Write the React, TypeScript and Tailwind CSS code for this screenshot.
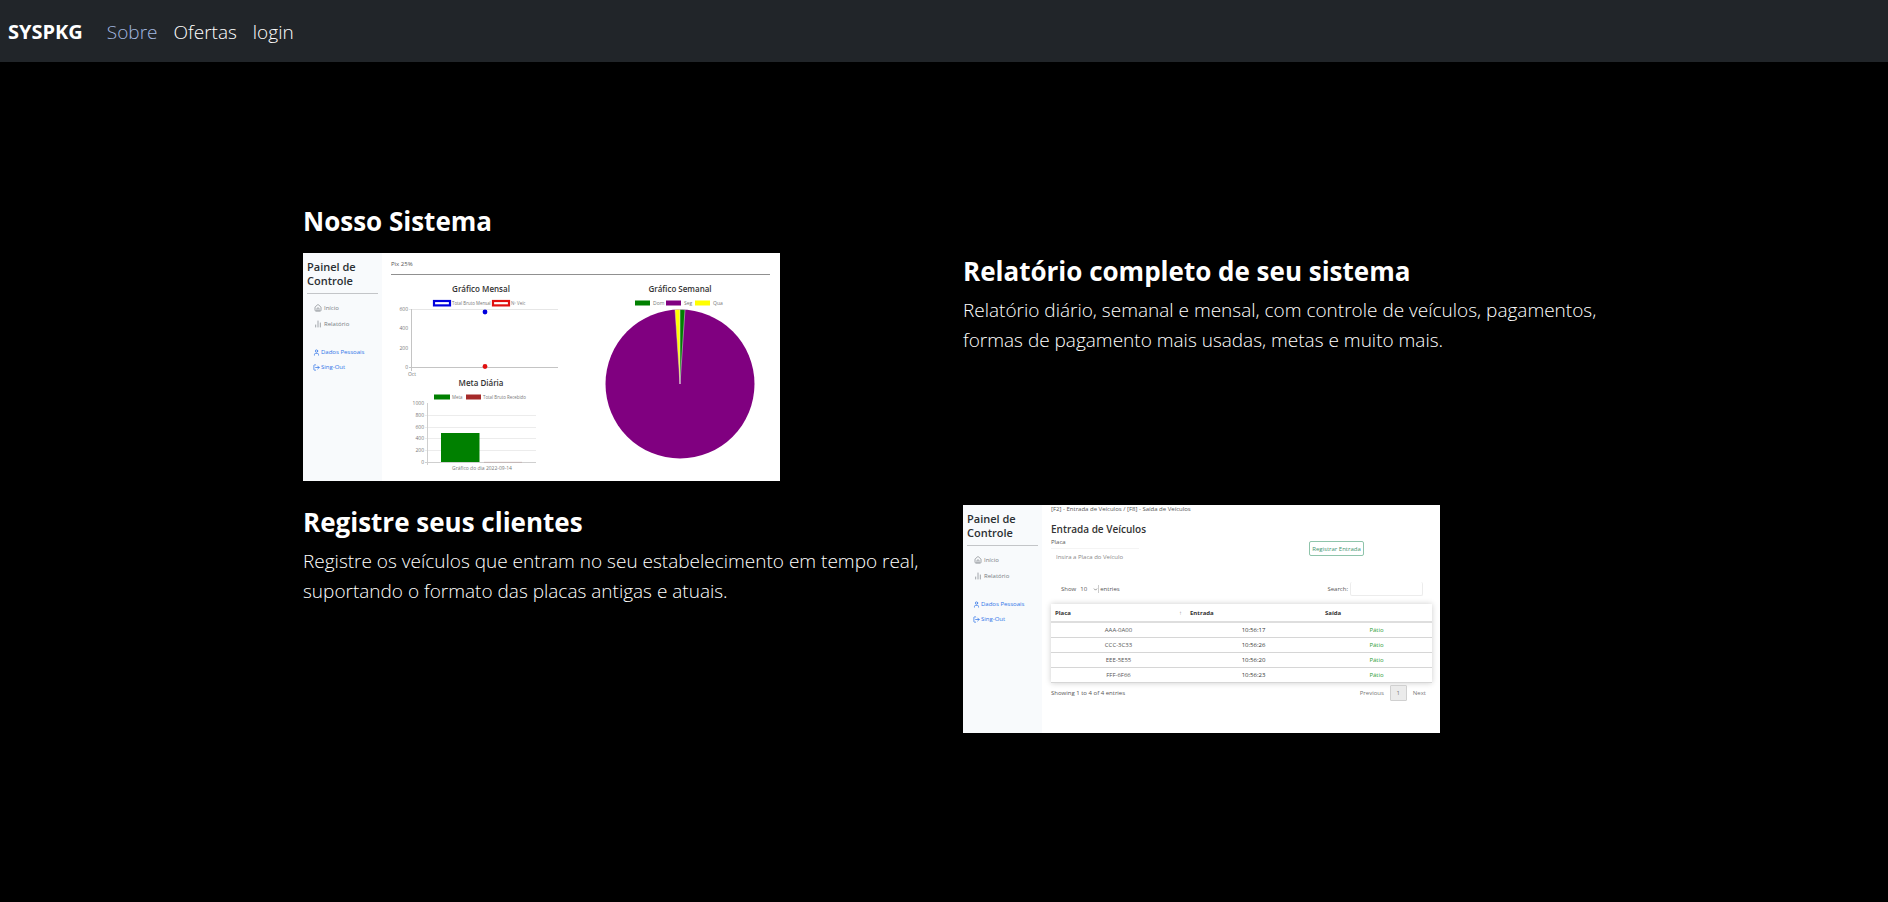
import React from "react";
import { BarChart2, ChevronDown, Home, LogOut, User } from "lucide-react";

function NavBar() {
  return (
    <nav className="flex h-[62px] items-center bg-[#212529] px-2 pt-[2px] text-[19px] font-light text-white">
      <a href="#" className="mr-6 text-[20px] font-bold">SYSPKG</a>
      <div className="flex gap-4">
        <a href="#sobre" className="text-[#a3b8e0]">Sobre</a>
        <a href="#ofertas">Ofertas</a>
        <a href="#login">login</a>
      </div>
    </nav>
  );
}

function Sidebar() {
  return (
    <aside className="w-[79px] shrink-0 bg-[#f8fafc] px-1 pt-[7px] text-[6px] leading-[8px] text-[#777c82]">
      <h3 className="border-b border-[#c3c5c8] pb-[5px] text-[11px] leading-[14px] font-semibold text-[#2b2f33]">
        Painel de Controle
      </h3>
      <div className="flex flex-col gap-2 px-[7px] pt-[10px]">
        <a href="#inicio" className="flex items-center gap-[2px]">
          <Home size={8} strokeWidth={2} />
          Início
        </a>
        <a href="#relatorio" className="flex items-center gap-[2px]">
          <BarChart2 size={8} strokeWidth={2} />
          Relatório
        </a>
      </div>
      <div className="flex flex-col gap-[7px] pt-5 pl-[6px] text-[#2f74e8]">
        <a href="#dados" className="flex items-center gap-[1px] whitespace-nowrap">
          <User size={7} strokeWidth={2.5} />
          Dados Pessoais
        </a>
        <a href="#sair" className="flex items-center gap-[1px]">
          <LogOut size={7} strokeWidth={2.5} />
          Sing-Out
        </a>
      </div>
    </aside>
  );
}

function Preview({ children }: { children: React.ReactNode }) {
  return (
    <div className="flex h-[228px] w-[477px] max-w-full overflow-hidden bg-white">
      <Sidebar />
      {children}
    </div>
  );
}

function MonthlyChart() {
  const ticks = [
    { label: "600", y: 20 },
    { label: "400", y: 39 },
    { label: "200", y: 59 },
    { label: "0", y: 78 },
  ];
  return (
    <svg viewBox="0 0 180 88" className="h-[88px] w-[180px]" fontSize="5" fill="#777">
      <rect x="43" y="12" width="16" height="4.4" fill="#fff" stroke="#0000dd" strokeWidth="2.2" />
      <text x="61" y="16" fontSize="4.4">Total Bruto Mensal</text>
      <rect x="102" y="12" width="16" height="4.4" fill="#fff" stroke="#e01010" strokeWidth="2.2" />
      <text x="120" y="16" fontSize="4.4">Nº Veíc</text>
      <path d="M18 20.5H167" stroke="#e6e6e6" />
      <path d="M20.5 20V82M18 78.5H167" stroke="#c4c4c4" fill="none" />
      {ticks.map((t) => (
        <text key={t.label} x="17" y={t.y + 2} textAnchor="end">{t.label}</text>
      ))}
      <circle cx="94" cy="23" r="2.4" fill="#0000dd" />
      <circle cx="94" cy="77.5" r="2.4" fill="#e01010" />
      <text x="21" y="86.5" textAnchor="middle">Oct</text>
    </svg>
  );
}

function DailyChart() {
  const ticks = [
    { label: "1000", y: 14 },
    { label: "800", y: 26 },
    { label: "600", y: 38 },
    { label: "400", y: 49 },
    { label: "200", y: 61 },
    { label: "0", y: 73 },
  ];
  return (
    <svg viewBox="0 0 180 84" className="h-[84px] w-[180px]" fontSize="5" fill="#777">
      <rect x="43" y="5.5" width="16" height="5" fill="#008000" />
      <text x="61" y="10" fontSize="4.4">Meta</text>
      <rect x="75" y="5.5" width="15" height="5" fill="#a52a2a" />
      <text x="92" y="10" fontSize="4.4">Total Bruto Recebido</text>
      <path d="M34 26.5H145M34 38.5H145M34 49.5H145M34 61.5H145" stroke="#ececec" />
      <path d="M36.5 14V76M34 73.5H145" stroke="#cfcfcf" fill="none" />
      {ticks.map((t) => (
        <text key={t.label} x="33" y={t.y + 2} textAnchor="end">{t.label}</text>
      ))}
      <rect x="50" y="44" width="38.5" height="29" fill="#008000" />
      <path d="M93 73.3H131" stroke="#b9a0a0" strokeWidth="0.6" />
      <text x="91" y="81" textAnchor="middle">Gráfico do dia 2022-09-14</text>
    </svg>
  );
}

function WeeklyChart() {
  return (
    <svg viewBox="0 0 152 172" className="h-[172px] w-[152px]" fontSize="5" fill="#777">
      <rect x="31" y="11.5" width="15" height="5" fill="#008000" />
      <text x="49" y="16">Dom</text>
      <rect x="62" y="11.5" width="15" height="5" fill="#800080" />
      <text x="80" y="16">Seg</text>
      <rect x="91" y="11.5" width="15" height="5" fill="#ffff00" />
      <text x="109" y="16">Qua</text>
      <circle cx="76" cy="95" r="74.5" fill="#800080" />
      <path d="M76 95L71 20.7A74.5 74.5 0 0 1 76 20.5Z" fill="#ffff00" stroke="#e8d8e8" strokeWidth="0.4" />
      <path d="M76 95V20.5A74.5 74.5 0 0 1 81 20.7Z" fill="#008000" stroke="#e8d8e8" strokeWidth="0.5" />
    </svg>
  );
}

function ReportPreview() {
  return (
    <Preview>
      <div className="flex min-w-0 flex-1 flex-col pr-[10px] pl-[9px] text-[6px] text-[#555]">
        <p className="border-b border-[#909090] pt-[7px] pb-[6px] leading-[8px]">Pix 25%</p>
        <div className="flex justify-between pt-2 text-[8px] leading-[12px] font-semibold text-[#333]">
          <div className="flex w-[180px] flex-col items-center">
            <h4>Gráfico Mensal</h4>
            <div className="-mt-[6px] font-normal"><MonthlyChart /></div>
            <h4>Meta Diária</h4>
            <div className="font-normal"><DailyChart /></div>
          </div>
          <div className="mr-[14px] flex flex-col items-center">
            <h4>Gráfico Semanal</h4>
            <div className="-mt-[6px] font-normal"><WeeklyChart /></div>
          </div>
        </div>
      </div>
    </Preview>
  );
}

const entries = [
  { plate: "AAA-0A00", time: "10:56:17" },
  { plate: "CCC-3C33", time: "10:56:26" },
  { plate: "EEE-5E55", time: "10:56:20" },
  { plate: "FFF-6F66", time: "10:56:23" },
];

function EntryPreview() {
  return (
    <Preview>
      <div className="flex min-w-0 flex-1 flex-col pr-2 pl-[9px] text-[6px] leading-[8px] text-[#555]">
        <p>[F2] - Entrada de Veículos / [F8] - Saída de Veículos</p>
        <div className="flex items-start justify-between pt-[9px] pr-[68px]">
          <div>
            <h4 className="text-[10px] leading-[14px] font-semibold text-[#333]">Entrada de Veículos</h4>
            <label htmlFor="placa" className="block pt-[2px]">Placa</label>
            <input
              id="placa"
              placeholder="Insira a Placa do Veículo"
              className="mt-[2px] block h-4 w-[88px] border-t border-[#f4f4f4] px-[5px] placeholder:text-[#888]"
            />
          </div>
          <button className="mt-[19px] h-[15px] w-[55px] rounded-[2px] border border-[#8fc4ab] whitespace-nowrap text-[#3f9470]">
            Registrar Entrada
          </button>
        </div>
        <div className="flex items-center justify-between pt-[18px] pr-[9px] pl-[10px]">
          <label className="flex items-center">
            Show
            <span className="ml-[4px] flex items-center border-r border-[#ccc]">
              <select className="w-[13px] appearance-none leading-[8px]">
                <option>10</option>
              </select>
              <ChevronDown size={5} strokeWidth={3} className="pointer-events-none" />
            </span>
            <span className="ml-[1px]">entries</span>
          </label>
          <label className="flex items-center gap-[2px]">
            Search:
            <input className="h-[14px] w-[73px] rounded-[2px] border border-t-0 border-[#ececec]" />
          </label>
        </div>
        <table className="mt-2 w-full table-fixed shadow-[0_0_6px_rgba(0,0,0,0.2)]">
          <colgroup>
            <col className="w-[135px]" />
            <col className="w-[135px]" />
            <col />
          </colgroup>
          <thead>
            <tr className="h-[18px] border-b-2 border-[#dedede] text-left text-[#333]">
              <th className="px-1">
                <span className="flex justify-between">
                  Placa <span className="font-normal text-[#999]">↑</span>
                </span>
              </th>
              <th className="px-1">Entrada</th>
              <th className="px-1">Saída</th>
            </tr>
          </thead>
          <tbody>
            {entries.map((e) => (
              <tr key={e.plate} className="h-[15px] border-b border-[#d6d6d6] text-center">
                <td>{e.plate}</td>
                <td className="text-[#333]">{e.time}</td>
                <td className="text-[#2f9e38]">Pátio</td>
              </tr>
            ))}
          </tbody>
        </table>
        <div className="flex items-center justify-between pt-[2px] pr-[6px]">
          <p>Showing 1 to 4 of 4 entries</p>
          <div className="flex items-center gap-[6px] text-[#777]">
            <button>Previous</button>
            <button className="h-4 w-[17px] rounded-[1px] border border-[#d0d0d0] bg-[#ebebeb]">1</button>
            <button>Next</button>
          </div>
        </div>
      </div>
    </Preview>
  );
}

function Feature({ title, text }: { title: string; text: string }) {
  return (
    <div>
      <h2 className="text-[26px] leading-[34px] font-bold">{title}</h2>
      <p className="mt-[7px] text-[19px] leading-[30px] font-light">{text}</p>
    </div>
  );
}

export default function App() {
  return (
    <div className="min-h-screen bg-black font-['Open_Sans','Noto_Sans',sans-serif] text-white">
      <NavBar />
      <main className="mx-auto grid max-w-[1344px] grid-cols-2 gap-x-4 gap-y-6 pt-[142px] pr-[9px] pl-[31px]">
        <section>
          <h2 className="mb-[15px] text-[26px] leading-[34px] font-bold">Nosso Sistema</h2>
          <ReportPreview />
        </section>
        <section className="pt-[50px]">
          <Feature
            title="Relatório completo de seu sistema"
            text="Relatório diário, semanal e mensal, com controle de veículos, pagamentos, formas de pagamento mais usadas, metas e muito mais."
          />
        </section>
        <section>
          <Feature
            title="Registre seus clientes"
            text="Registre os veículos que entram no seu estabelecimento em tempo real, suportando o formato das placas antigas e atuais."
          />
        </section>
        <section>
          <EntryPreview />
        </section>
      </main>
    </div>
  );
}
